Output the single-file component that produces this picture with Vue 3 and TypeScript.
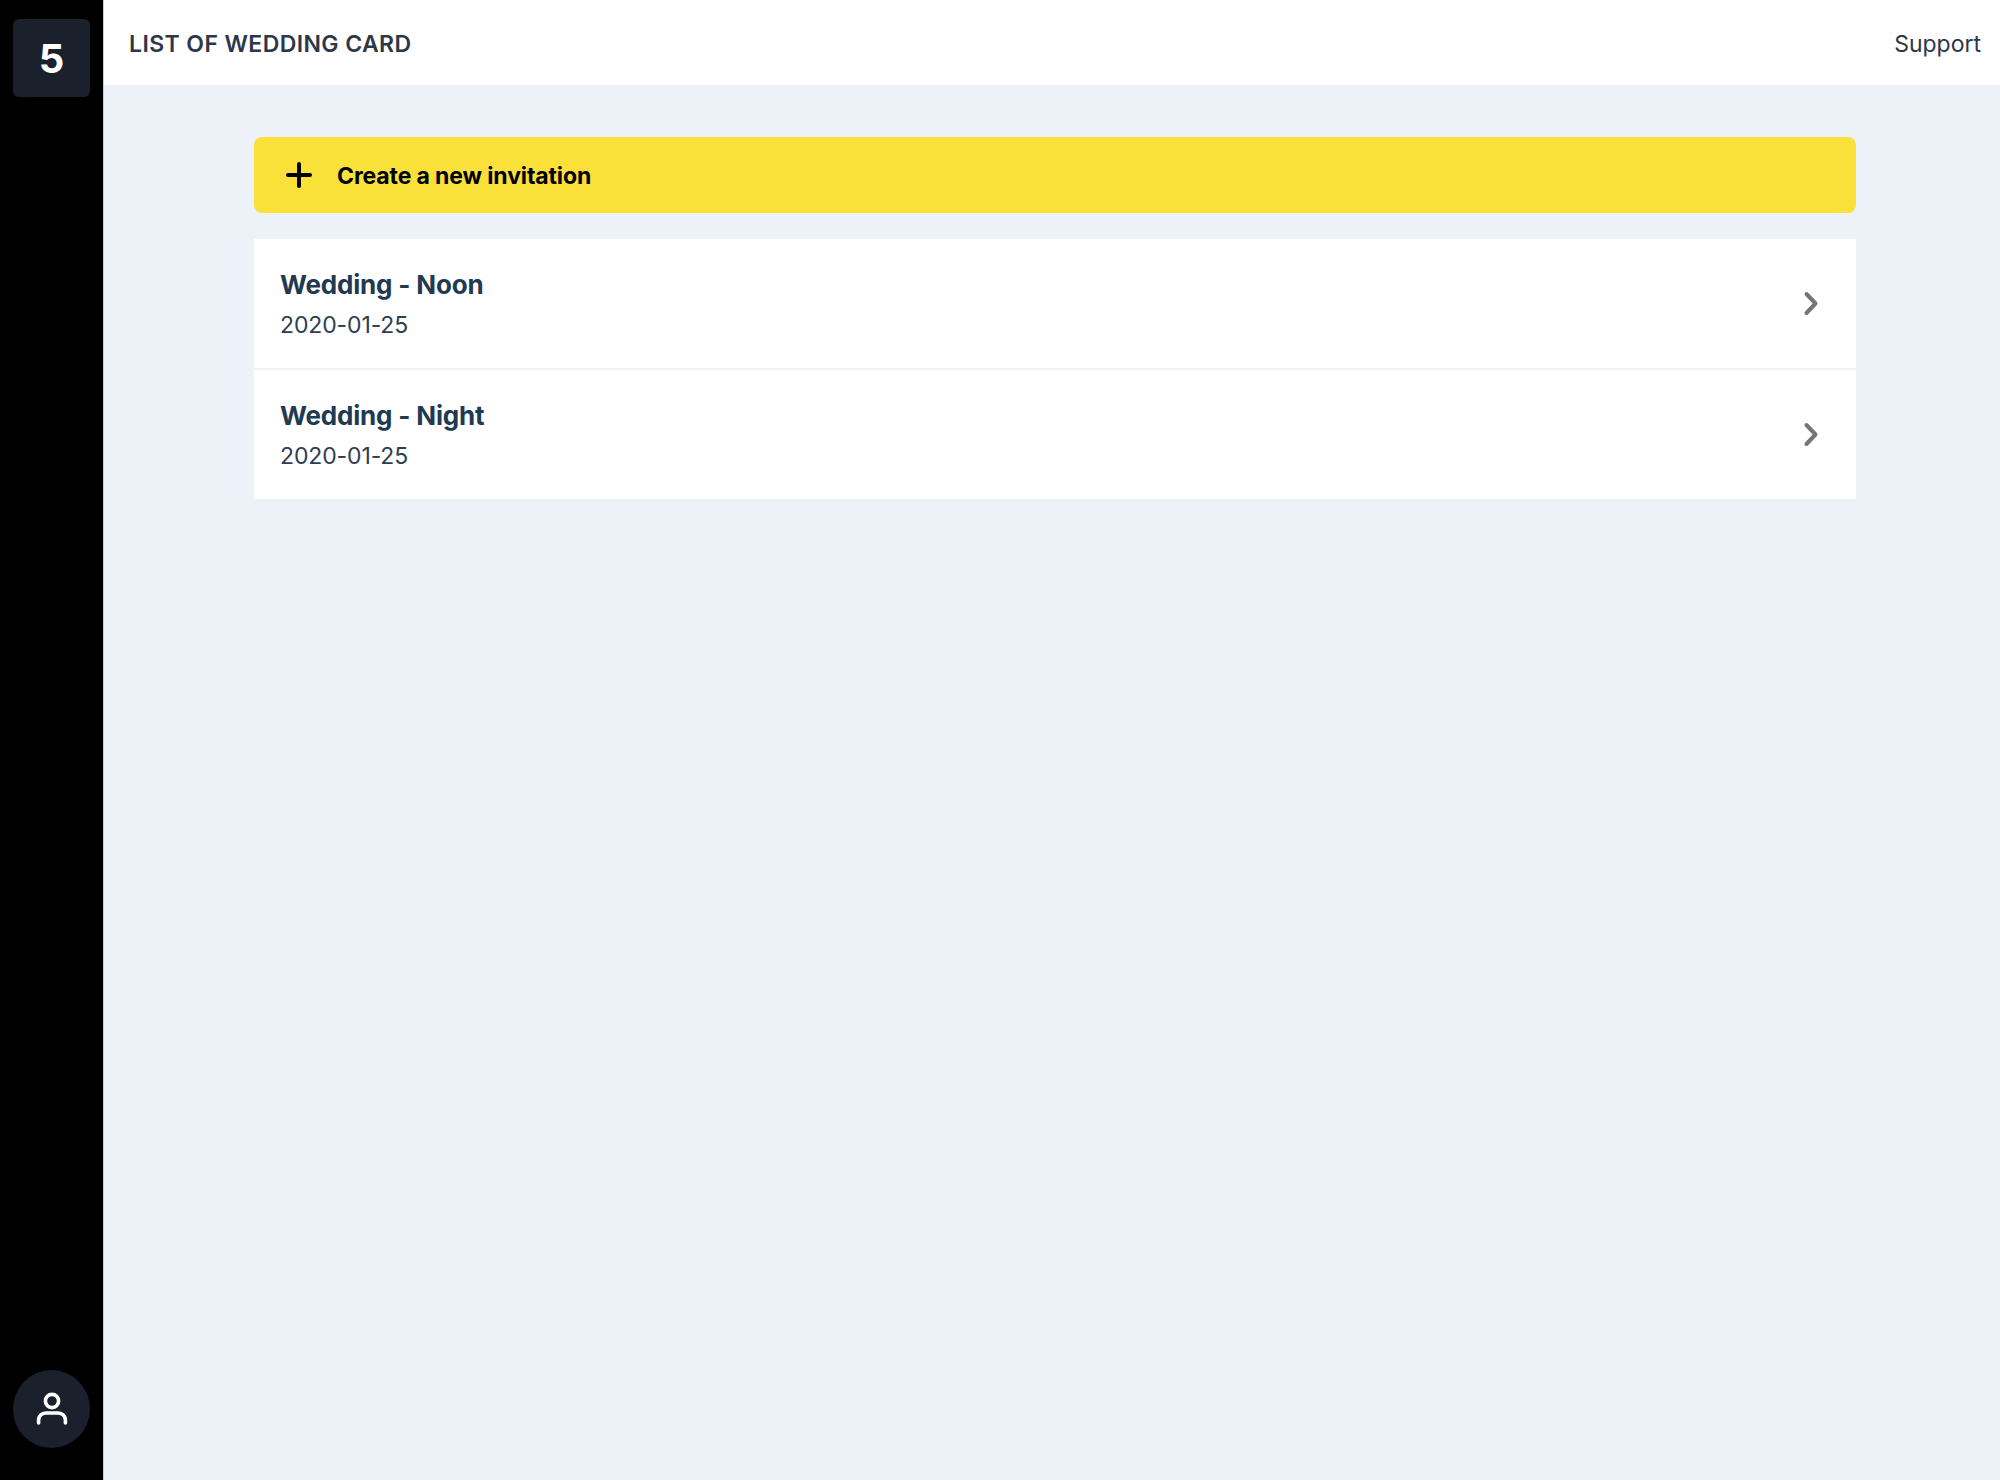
<script setup lang="ts">
interface Card { title: string; date: string }
const cards: Card[] = [
  { title: 'Wedding - Noon', date: '2020-01-25' },
  { title: 'Wedding - Night', date: '2020-01-25' },
]
</script>

<template>
  <div class="app">
    <aside class="sidebar">
      <div class="logo">5</div>
      <div class="avatar">
        <svg width="32" height="34" viewBox="0 0 32 34" fill="none" stroke="#fff" stroke-width="3.6" stroke-linecap="round">
          <circle cx="16" cy="9" r="6.6" />
          <path d="M2.6 31v-3a7 7 0 0 1 7-7h12.8a7 7 0 0 1 7 7v3" />
        </svg>
      </div>
    </aside>
    <div class="content">
      <header class="topbar">
        <h1 class="heading">LIST OF WEDDING CARD</h1>
        <span class="support">Support</span>
      </header>
      <main class="main">
        <button class="create" type="button">
          <svg width="26" height="26" viewBox="0 0 26 26" fill="none" stroke="#000" stroke-width="4" stroke-linecap="round">
            <path d="M13 2v22M2 13h22" />
          </svg>
          <span class="create-label">Create a new invitation</span>
        </button>
        <ul class="list">
          <li v-for="card in cards" :key="card.title" class="row">
            <div>
              <div class="title">{{ card.title }}</div>
              <div class="date">{{ card.date }}</div>
            </div>
            <svg class="chev" width="16" height="26" viewBox="0 0 16 26" fill="none" stroke="#757575" stroke-width="4" stroke-linecap="round" stroke-linejoin="round">
              <path d="M3.5 3 12.5 12.5 3.5 22" />
            </svg>
          </li>
        </ul>
      </main>
    </div>
  </div>
</template>

<style>
html, body { margin: 0; padding: 0; }
</style>

<style scoped>
.app {
  display: flex;
  width: 2000px;
  height: 1480px;
  font-family: Inter, "Liberation Sans", sans-serif;
  background: #edf2f9;
}
.sidebar {
  width: 104px;
  flex: none;
  background: #000;
  border-right: 1px solid #c9cbce;
  display: flex;
  flex-direction: column;
  justify-content: space-between;
  align-items: center;
  padding: 19px 0 32px;
  box-sizing: border-box;
}
.logo {
  width: 77px;
  height: 78px;
  border-radius: 6px;
  background: #1a202c;
  color: #fff;
  font-size: 40px;
  font-weight: 700;
  display: flex;
  align-items: center;
  justify-content: center;
}
.avatar {
  width: 77px;
  height: 78px;
  border-radius: 50%;
  background: #1a202c;
  display: flex;
  align-items: center;
  justify-content: center;
}
.content {
  flex: 1;
  display: flex;
  flex-direction: column;
  min-width: 0;
}
.topbar {
  height: 85px;
  flex: none;
  background: #fff;
  display: flex;
  align-items: center;
  justify-content: space-between;
  padding: 2px 19px 0 25px;
  box-sizing: border-box;
}
.heading {
  margin: 0;
  font-size: 23px;
  font-weight: 600;
  letter-spacing: 0.4px;
  color: #2d3748;
}
.support {
  font-size: 23px;
  color: #2d3748;
}
.main {
  flex: 1;
  padding: 52px 144px 0 150px;
}
.create {
  width: 100%;
  height: 76px;
  border: 0;
  border-radius: 8px;
  background: #f9e13a;
  display: flex;
  align-items: center;
  gap: 25px;
  padding: 0 32px;
  font: inherit;
  font-size: 23px;
  font-weight: 700;
  letter-spacing: -0.13px;
  color: #000;
  box-sizing: border-box;
}
.create-label {
  padding-top: 2px;
}
.list {
  list-style: none;
  margin: 26px 0 0;
  padding: 0;
  background: #fff;
}
.row {
  height: 129px;
  box-sizing: border-box;
  display: flex;
  align-items: center;
  justify-content: space-between;
  padding: 0 37px 0 26px;
}
.row + .row {
  border-top: 2px solid #edf2f7;
  height: 131px;
}
.title {
  font-size: 26px;
  font-weight: 700;
  letter-spacing: -0.18px;
  color: #213a52;
  line-height: 36px;
}
.date {
  font-size: 23px;
  letter-spacing: -0.12px;
  color: #2d3e50;
  line-height: 32px;
  margin-top: 6px;
}
</style>
